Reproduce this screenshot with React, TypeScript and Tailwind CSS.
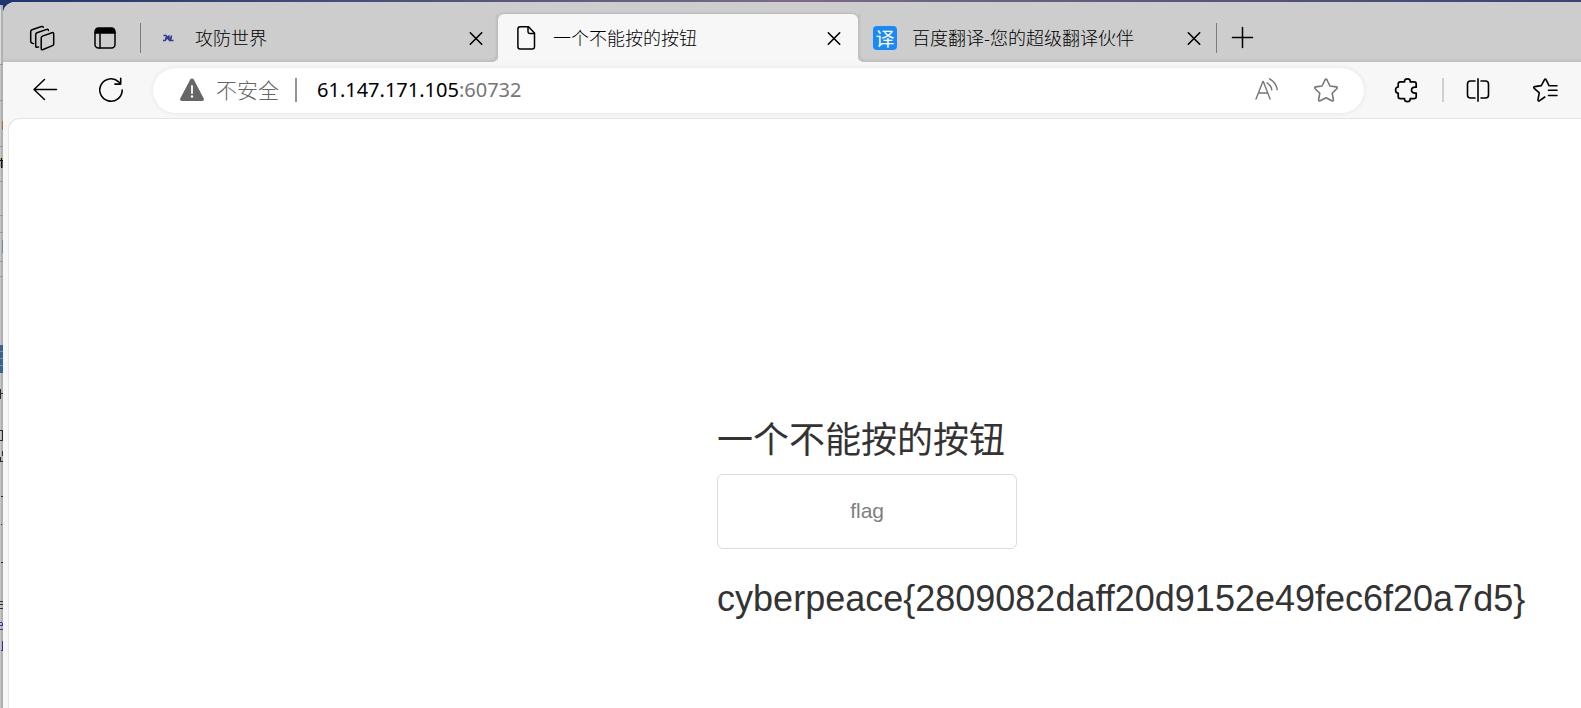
import type { ReactNode } from "react";

function IconButton({ label, children }: { label: string; children: ReactNode }) {
  return (
    <button type="button" aria-label={label} className="flex size-6 shrink-0 items-center justify-center">
      {children}
    </button>
  );
}

function Icon({ children, width = 1.5 }: { children: ReactNode; width?: number }) {
  return (
    <svg
      viewBox="0 0 24 24"
      className="size-6 shrink-0 overflow-visible"
      fill="none"
      stroke="currentColor"
      strokeWidth={width}
      strokeLinecap="round"
      strokeLinejoin="round"
      aria-hidden="true"
    >
      {children}
    </svg>
  );
}

function CloseIcon() {
  return (
    <Icon width={1.6}>
      <path d="M6.3 6.8l11.4 11.4M17.7 6.8L6.3 18.2" />
    </Icon>
  );
}

function TabLabel({ icon, title }: { icon: ReactNode; title: string }) {
  return (
    <>
      <a href="#" className="flex min-w-0 flex-1 items-center gap-[15px]">
        {icon}
        <span className="truncate pb-0.5">{title}</span>
      </a>
      <IconButton label={`关闭 ${title}`}>
        <CloseIcon />
      </IconButton>
    </>
  );
}

// Slice of the editor window that peeks out behind the browser
function BackgroundSliver() {
  return (
    <svg viewBox="0 0 3 708" className="h-[708px] w-[3px]" shapeRendering="crispEdges" aria-hidden="true">
      <rect width="1" height="708" fill="#c6c6c6" />
      <rect x="1" width="2" height="708" fill="#b0b0b0" />
      <rect width="3" height="5" fill="#1f3570" />
      <rect y="9" width="1" height="55" fill="#dedede" />
      <g fill="#989898">
        <rect y="64" width="3" height="1" />
        <rect y="100" width="3" height="1" />
        <rect y="146" width="3" height="1" />
        <rect y="181" width="3" height="1" />
        <rect y="215" width="3" height="1" />
        <rect y="232" width="3" height="1" />
        <rect y="261" width="3" height="1" />
        <rect y="276" width="3" height="1" />
      </g>
      <rect x="2" y="121" width="1" height="9" fill="#a8742a" />
      <rect y="158" width="3" height="9" fill="#c8a468" />
      <rect x="1" y="158" width="1" height="10" fill="#111" />
      <rect x="2" y="160" width="1" height="8" fill="#345f91" />
      <rect y="160" width="3" height="1" fill="#111" />
      <rect x="2" y="240" width="1" height="13" fill="#6e87a8" />
      <rect y="345" width="3" height="28" fill="#3b638f" />
      <rect y="351" width="3" height="1" fill="#7792b0" />
      <rect y="358" width="3" height="1" fill="#7792b0" />
      <rect y="365" width="3" height="1" fill="#7792b0" />
      <g fill="#2b2b2b">
        <rect y="389" width="1" height="10" />
        <rect y="393" width="3" height="1" />
        <rect x="2" y="430" width="1" height="10" />
        <rect y="430" width="2" height="1" />
        <rect y="440" width="3" height="1" />
        <rect x="2" y="451" width="1" height="5" />
        <rect y="457" width="1" height="4" />
        <rect y="461" width="3" height="1" />
        <rect x="1" y="496" width="2" height="1" />
        <rect x="1" y="524" width="1" height="1" />
        <rect x="1" y="562" width="2" height="1" />
        <rect y="601" width="3" height="1" />
        <rect y="604" width="3" height="1" />
        <rect y="608" width="3" height="1" />
      </g>
      <g fill="#3333a8">
        <rect y="622" width="2" height="1" />
        <rect x="2" y="623" width="1" height="2" />
        <rect y="625" width="3" height="1" />
        <rect y="629" width="3" height="1" />
        <rect x="2" y="641" width="1" height="10" />
        <rect x="1" y="650" width="2" height="1" />
      </g>
    </svg>
  );
}

function TabBar() {
  return (
    <div className="rounded-tl-xl bg-[#cdcdcd] pt-3 text-[18px] text-black">
      <nav aria-label="标签页" className="flex h-12 bg-[#f7f7f7]">
        <div className="flex min-w-0 items-center rounded-br-md bg-[#cdcdcd] pl-[27px] shadow-[inset_-2px_-2px_2px_#bfbfbf]">
          <IconButton label="工作区">
            <Icon>
              <path d="M12.4 10.1l9.6-3.4q1.7-.5 1.7 1.2v10q0 1.2-1.2 1.7l-9.4 3.9q-1.9.7-1.9-1.2v-10q0-1.6 1.2-2.2z" />
              <path d="M8.6 20.9l-1.4.4q-1.5.3-1.5-1.2V9q0-1.6 1.3-2.2l9.7-3.4q1.4-.4 1.7 1" />
              <path d="M3.5 17.6l-1.2-.4Q.7 16.7.7 15.2V5.8q0-1.5 1.3-2.1l9.5-3.2q1.4-.4 1.8.8" />
            </Icon>
          </IconButton>
          <div className="ml-[39px]">
            <IconButton label="标签页操作">
              <Icon>
                <rect x="2" y="2" width="20" height="20" rx="3.5" />
                <path d="M2 7.500V5.500q0-3.500 3.500-3.500h13q3.500 0 3.500 3.500v2z" fill="currentColor" stroke="none" />
                <path d="M2 6.800h20M7 8v14" />
              </Icon>
            </IconButton>
          </div>
          <span className="ml-[23px] h-[30px] w-px bg-[#7d7d7d]" />
          <div className="flex w-[357px] min-w-0 items-center pl-[15px] pr-2.5">
            <TabLabel
              title="攻防世界"
              icon={
                <svg viewBox="0 0 24 24" className="size-6 shrink-0" fill="none" stroke="#2a3f8f" strokeWidth="1.6" aria-hidden="true">
                  <path d="M7.500 9.500h2.500l4 5.500M13.500 9.500l-4.500 5H7M15.500 9.500l-1 5h3M9 12h6" />
                </svg>
              }
            />
          </div>
        </div>
        <div className="w-[360px] min-w-0 bg-[#cdcdcd]">
          <div className="flex h-full items-center rounded-t-md bg-[#f7f7f7] pl-4 pr-3 shadow-[0_-1px_2px_#b5b5b5]">
            <TabLabel
              title="一个不能按的按钮"
              icon={
                <Icon>
                  <path d="M6.200.8h8.300l6 6.200v13.700q0 2.300-2.300 2.300H6.200q-2.300 0-2.300-2.300V3.100Q3.900.8 6.200.8z" />
                  <path d="M14 1v4.800q0 1.700 1.700 1.700h4.600" />
                </Icon>
              }
            />
          </div>
        </div>
        <div className="flex min-w-0 flex-1 items-center rounded-bl-md bg-[#cdcdcd] shadow-[inset_2px_-2px_2px_#bfbfbf]">
          <div className="flex w-[358px] min-w-0 items-center pl-[15px] pr-2.5">
            <TabLabel
              title="百度翻译-您的超级翻译伙伴"
              icon={
                <span className="flex size-6 shrink-0 items-center justify-center rounded bg-[#1989fa] text-[19px] leading-6 font-normal text-white">
                  译
                </span>
              }
            />
          </div>
          <span className="h-[30px] w-px bg-[#7d7d7d]" />
          <div className="ml-3.5">
            <IconButton label="新建标签页">
              <Icon>
                <path d="M1.500 11.500h20M11.500 1.500v20" />
              </Icon>
            </IconButton>
          </div>
        </div>
      </nav>
    </div>
  );
}

function Toolbar() {
  return (
    <div className="flex h-14 items-center pl-[30px] pr-6 text-black">
      <IconButton label="返回">
        <Icon>
          <path d="M23.500 11.500H1M11.500 1.500L1 11.500l10.500 10" />
        </Icon>
      </IconButton>
      <div className="ml-[42px]">
        <IconButton label="刷新">
          <Icon width={1.6}>
            <path d="M23.200 12a11.200 11.200 0 1 1-3.600-8.200l1.900 1.900M21.700.4v5.700h-5.800" />
          </Icon>
        </IconButton>
      </div>
      <div className="ml-[30px] flex h-[45px] min-w-0 flex-1 items-center rounded-full bg-white pl-[27px] pr-[26px] shadow-[0_0_4px_#e2e2e2]">
        <button type="button" className="flex shrink-0 items-center gap-3 text-[21px] text-[#666666]">
          <svg viewBox="0 0 24 24" className="size-6" aria-hidden="true">
            <path
              d="M10.200 1.600q1.800-2.300 3.600 0l9.800 18.600q1 2.500-1.600 2.800H2q-2.600-.3-1.600-2.800z"
              fill="#666666"
            />
            <path d="M12 8v7" stroke="white" strokeWidth="1.8" strokeLinecap="round" />
            <circle cx="12" cy="18.5" r="1.2" fill="white" />
          </svg>
          不安全
        </button>
        <span className="ml-4 h-6 w-0.5 shrink-0 bg-[#959595]" />
        <a href="#" className="ml-5 truncate font-['Noto_Sans',sans-serif] text-[20px] font-normal text-black">
          61.147.171.105<span className="text-[#767676]">:60732</span>
        </a>
        <div className="ml-auto flex gap-[35px] text-[#767676]">
          <IconButton label="大声朗读此页面">
            <Icon width={1.4}>
              <path d="M1 21L7.900 3.500h.4L15.100 21M3.500 15h9.200" />
              <path d="M12 4.800q4 2.400 4.800 7M14.500.8q6.500 3.400 7.700 10.800" />
            </Icon>
          </IconButton>
          <IconButton label="收藏此页面">
            <Icon width={1.6}>
              <path d="M11 2q1-1.800 2 0l3 6 6.300.9q1.700.4.500 1.800l-4.600 4.500 1.200 6.400q.1 1.800-1.600 1.200L12 19.700l-5.800 3.100q-1.700.6-1.600-1.200l1.200-6.400-4.600-4.500q-1.200-1.400.5-1.800L8 8z" />
            </Icon>
          </IconButton>
        </div>
      </div>
      <div className="ml-[31px]">
        <IconButton label="扩展">
          <Icon width={1.7}>
            <path d="M5.400 3.800h4.200q-.4-3 2.800-3t2.800 3H19q2.200 0 2.200 2.200v3.200q-4.700-.5-4.700 2.900t4.700 2.900v3.400q0 2.200-2.200 2.200h-3.800q.3 3-2.800 3t-2.800-3H5.400q-2.200 0-2.200-2.200v-3.200q-2.600 0-2.600-3.100T3.200 9V6q0-2.200 2.200-2.200z" />
          </Icon>
        </IconButton>
      </div>
      <span className="ml-[23px] h-6 w-0.5 shrink-0 bg-[#cfcfcf]" />
      <div className="ml-[22px]">
        <IconButton label="分屏窗口">
          <Icon width={1.6}>
            <path d="M12 .8v22.500M9 3H4.500Q1.500 3 1.500 6v11q0 3 3 3H9M15 3h4.500q3 0 3 3v11q0 3-3 3H15" />
          </Icon>
        </IconButton>
      </div>
      <div className="ml-[43px]">
        <IconButton label="收藏夹">
          <Icon width={1.6}>
            <path d="M11.800 19l-5.200 3.700q-1.700.8-1.600-1.200l1.300-6.600-5.100-4.600Q0 8.900 1.700 8.600l6.600-1 3.100-5.800q.9-1.600 1.800 0L16 7.600" />
            <path d="M15.500 12.300H24M15.500 17.500H24M17 7.800h7" />
          </Icon>
        </IconButton>
      </div>
    </div>
  );
}

export default function App() {
  return (
    <div className="flex min-h-screen overflow-hidden bg-[#b0b0b0] font-['Noto_Sans_CJK_SC',sans-serif] font-light">
      <BackgroundSliver />
      <div className="flex min-w-0 flex-1 flex-col bg-linear-to-r from-[#1f3570] via-[#7a6b85] to-[#3b4374] pt-0.5">
        <div className="flex flex-1 flex-col rounded-tl-xl bg-[#f7f7f7]">
          <TabBar />
          <Toolbar />
          <main className="ml-[5px] flex-1 rounded-tl-xl border-l border-t border-[#e3e3e3] bg-white pt-[302px] pl-[calc(45%-2px)] font-['Liberation_Sans','Noto_Sans_CJK_SC',sans-serif] font-normal text-[#333333]">
            <h1 className="text-[36px] leading-10">一个不能按的按钮</h1>
            <button
              type="button"
              className="mt-[13px] h-[75px] w-[300px] rounded-md border border-[#dcdcdc] bg-white pb-0.5 text-[21px] text-[#808080]"
            >
              flag
            </button>
            <h2 className="mt-[30px] text-[36px] leading-10">cyberpeace&#123;2809082daff20d9152e49fec6f20a7d5&#125;</h2>
          </main>
        </div>
      </div>
    </div>
  );
}
